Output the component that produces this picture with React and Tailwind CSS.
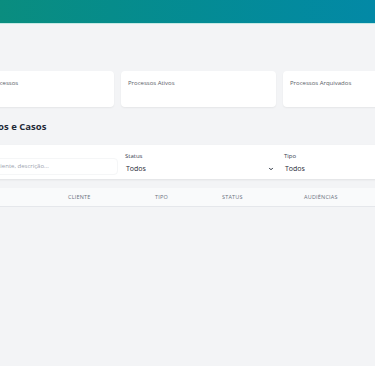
import React from 'react';

const stats = ['Total de Processos', 'Processos Ativos', 'Processos Arquivados', 'Audiências Próximas'];

const columns = [
  { label: 'Processo', w: 'w-[109px]' },
  { label: 'Cliente', w: 'w-[87px]' },
  { label: 'Tipo', w: 'w-[67px]' },
  { label: 'Status', w: 'w-[82px]' },
  { label: 'Audiências', w: 'w-[90px]' },
];

const App = () => {
  return (
    <div className="min-h-screen bg-[#f3f4f6] overflow-hidden font-['Open_Sans',sans-serif]">
      {/* topo */}
      <header className="h-[24px] bg-gradient-to-r from-[#0a8d7f] to-[#0389a6] border-b border-[#c4e9e4]" />

      <main className="ml-[-41px] w-[680px] pt-[47px]">
        {/* cartões de resumo */}
        <div className="flex gap-[7px]">
          {stats.map((s) => (
            <div key={s} className="w-[155px] h-[36px] bg-white rounded-[4px] shadow-[0_1px_2px_rgba(0,0,0,0.06)] px-[7px] pt-[8px]">
              <p className="text-[6px] leading-[8px] text-[#5b6068]">{s}</p>
            </div>
          ))}
        </div>

        {/* título */}
        <h2 className="mt-[13px] pl-[3px] text-[9.5px] leading-[14px] font-bold text-[#1f2937]">Processos e Casos</h2>

        {/* filtros */}
        <div className="mt-[11px] -ml-[10px] h-[34px] bg-white shadow-[0_1px_2px_rgba(0,0,0,0.08)] flex items-end pb-[4px] pl-[10px]">
          <div className="w-[159px] h-[17px] rounded-[4px] border border-[#f5f6f7] flex items-center px-[4px]">
            <span className="text-[6px] text-[#9ca3af] whitespace-nowrap">Buscar por cliente, descrição...</span>
          </div>
          <div className="ml-[4px] w-[155px] flex flex-col">
            <span className="text-[6px] leading-[8px] text-[#374151] pl-[3px] mb-[3px]">Status</span>
            <div className="h-[12px] flex items-center justify-between pl-[4px] pr-[3px]">
              <span className="text-[7px] text-[#1f2937]">Todos</span>
              <svg width="6" height="6" viewBox="0 0 24 24" fill="none" stroke="#1f2937" strokeWidth="4" strokeLinecap="round" strokeLinejoin="round">
                <path d="M6 9l6 6 6-6" />
              </svg>
            </div>
          </div>
          <div className="ml-[7px] w-[155px] flex flex-col">
            <span className="text-[6px] leading-[8px] text-[#374151] mb-[3px]">Tipo</span>
            <div className="h-[12px] flex items-center pl-[1px]">
              <span className="text-[7px] text-[#1f2937]">Todos</span>
            </div>
          </div>
        </div>

        {/* cabeçalho da tabela */}
        <div className="mt-[9px] -ml-[10px] h-[19px] bg-[#f9fafb] border-b border-[#e5e7eb] flex items-center pl-[10px]">
          {columns.map((c) => (
            <span key={c.label} className={`${c.w} shrink-0 text-[5.5px] uppercase tracking-[0.2px] text-[#6b7280]`}>
              {c.label}
            </span>
          ))}
        </div>
      </main>
    </div>
  );
};

export default App;
